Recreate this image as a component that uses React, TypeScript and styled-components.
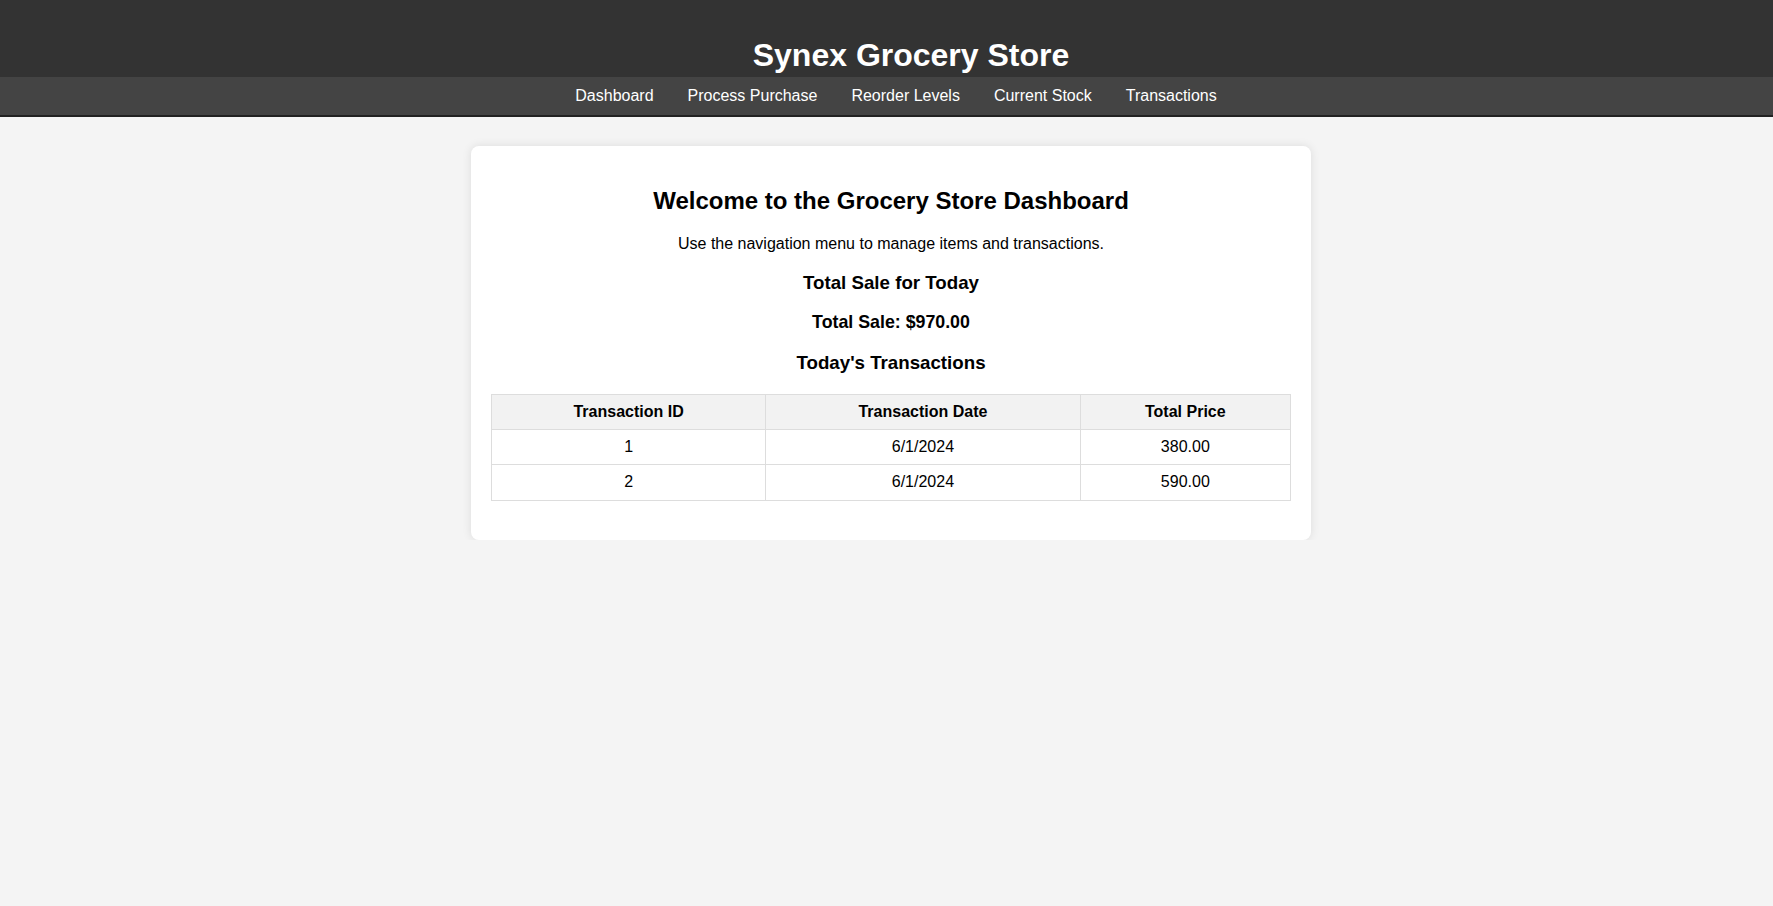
import React from "react";
import styled, { createGlobalStyle } from "styled-components";

const GlobalStyle = createGlobalStyle`
  html, body {
    margin: 0;
    padding: 0;
    background: #f4f4f4;
    font-family: "Liberation Sans", Arial, sans-serif;
    color: #000;
  }
`;

const Header = styled.header`
  background: #333;
  color: #fff;
  padding: 37px 0 3px 49px;
  text-align: center;
`;

const Title = styled.h1`
  margin: 0;
  font-size: 32px;
  font-weight: bold;
  line-height: 36.8px;
`;

const Nav = styled.nav`
  background: #444;
  border-bottom: 2px solid #222;
  padding: 10px 0 10px 19px;
  display: flex;
  justify-content: center;
  gap: 34px;
`;

const NavLink = styled.a`
  color: #fff;
  text-decoration: none;
  font-size: 16px;
  line-height: 18.4px;
  cursor: pointer;
`;

const Main = styled.main`
  display: flex;
  justify-content: center;
  padding: 29px 0 0 9px;
`;

const Card = styled.section`
  width: 800px;
  padding: 21px 20px 19px;
  background: #fff;
  border-radius: 8px;
  box-shadow: 0 0 10px rgba(0, 0, 0, 0.1);
  text-align: center;
`;

const Heading = styled.h2`
  font-size: 24px;
  font-weight: bold;
  margin: 19.92px 0;
  line-height: 27.6px;
`;

const Lead = styled.p`
  font-size: 16px;
  margin: 16px 0;
  line-height: 18.4px;
`;

const SubHeading = styled.h3<{ $size?: number }>`
  font-size: ${(p) => p.$size ?? 18.72}px;
  font-weight: bold;
  margin: 18.72px 0;
  line-height: 21.5px;
`;

const Table = styled.table`
  width: 100%;
  border-collapse: collapse;
  margin: 20px 0;
  font-size: 16px;
`;

const Th = styled.th`
  border: 1px solid #ddd;
  background: #f2f2f2;
  padding: 8px;
  font-weight: bold;
  text-align: center;
  line-height: 18.4px;
`;

const Td = styled.td`
  border: 1px solid #ddd;
  padding: 8px;
  text-align: center;
  line-height: 18.4px;
`;

const navItems = ["Dashboard", "Process Purchase", "Reorder Levels", "Current Stock", "Transactions"];

const transactions = [
  { id: 1, date: "6/1/2024", total: "380.00" },
  { id: 2, date: "6/1/2024", total: "590.00" },
];

export default function App() {
  return (
    <>
      <GlobalStyle />
      <Header>
        <Title>Synex Grocery Store</Title>
      </Header>
      <Nav>
        {navItems.map((item) => (
          <NavLink key={item}>{item}</NavLink>
        ))}
      </Nav>
      <Main>
        <Card>
          <Heading>Welcome to the Grocery Store Dashboard</Heading>
          <Lead>Use the navigation menu to manage items and transactions.</Lead>
          <SubHeading>Total Sale for Today</SubHeading>
          <SubHeading $size={17.8}>Total Sale: $970.00</SubHeading>
          <SubHeading>Today's Transactions</SubHeading>
          <Table>
            <thead>
              <tr>
                <Th>Transaction ID</Th>
                <Th>Transaction Date</Th>
                <Th>Total Price</Th>
              </tr>
            </thead>
            <tbody>
              {transactions.map((t) => (
                <tr key={t.id}>
                  <Td>{t.id}</Td>
                  <Td>{t.date}</Td>
                  <Td>{t.total}</Td>
                </tr>
              ))}
            </tbody>
          </Table>
        </Card>
      </Main>
    </>
  );
}
